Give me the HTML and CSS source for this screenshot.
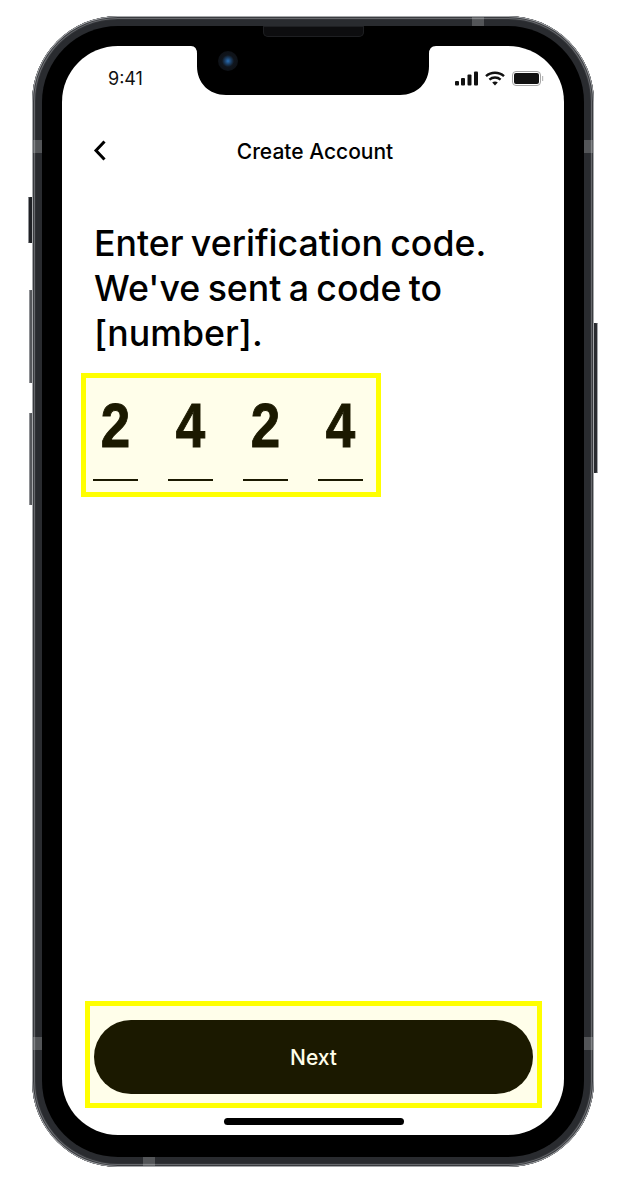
FILE: index.html
```html
<!DOCTYPE html>
<html lang="en">

<head>
    <meta charset="UTF-8">
    <meta name="viewport" content="width=device-width, initial-scale=1.0">
    <title>Create Account</title>
    <link rel="stylesheet" href="styles.css">
</head>

<body>
    <div class="phone">
        <!-- side buttons -->
        <span class="side-btn mute"></span>
        <span class="side-btn vol-up"></span>
        <span class="side-btn vol-down"></span>
        <span class="side-btn power"></span>

        <!-- antenna bands -->
        <span class="band band-left-top"></span>
        <span class="band band-right-top"></span>
        <span class="band band-left-bottom"></span>
        <span class="band band-right-bottom"></span>
        <span class="band band-top"></span>
        <span class="band band-bottom"></span>

        <span class="speaker"></span>

        <div class="bezel">
            <div class="screen">
                <svg class="notch" width="245" height="49" viewBox="0 0 245 49">
                    <path d="M0 0H245Q238 0 238 8V20C238 37 226 49 209 49H35C18 49 6 37 6 20V8Q6 0 0 0Z" fill="#000" />
                </svg>
                <span class="camera"></span>

                <div class="status-bar">
                    <span class="time">9:41</span>
                    <div class="status-icons">
                        <svg width="23" height="15" viewBox="0 0 23 15">
                            <rect x="0" y="10" width="4" height="4.5" rx="1" fill="#111" />
                            <rect x="6" y="7" width="4" height="7.5" rx="1" fill="#111" />
                            <rect x="12.5" y="3.5" width="4" height="11" rx="1" fill="#111" />
                            <rect x="19" y="0.5" width="4" height="14" rx="1" fill="#111" />
                        </svg>
                        <svg width="20" height="15" viewBox="0 0 20 15">
                            <path d="M1 5.2C6 .6 14 .6 19 5.2" fill="none" stroke="#111" stroke-width="2.4" />
                            <path d="M4.4 8.7C7.6 5.8 12.4 5.8 15.6 8.7" fill="none" stroke="#111" stroke-width="2.4" />
                            <path d="M7.2 11.4C8.8 10.2 11.2 10.2 12.8 11.4L10 14.4Z" fill="#111" />
                        </svg>
                        <svg width="32" height="15" viewBox="0 0 32 15">
                            <rect x="0.5" y="0.5" width="28" height="14" rx="3.5" fill="none" stroke="#a5a5a5" />
                            <rect x="2" y="2" width="25" height="11" rx="2" fill="#111" />
                            <rect x="30" y="5" width="1.2" height="5" fill="#bbb" />
                        </svg>
                    </div>
                </div>

                <div class="nav">
                    <svg class="back" width="13" height="21" viewBox="0 0 13 21">
                        <path d="M11.5 1.5L3 10.5L11.5 19.5" fill="none" stroke="#000" stroke-width="3" />
                    </svg>
                    <div class="nav-title">Create Account</div>
                </div>

                <h1>Enter verification code.<br>We've sent a code to<br>[number].</h1>

                <div class="code-box">
                    <div class="code-cell"><span>2</span></div>
                    <div class="code-cell"><span>4</span></div>
                    <div class="code-cell"><span>2</span></div>
                    <div class="code-cell"><span>4</span></div>
                </div>

                <div class="next-box">
                    <button class="next-btn">Next</button>
                </div>

                <div class="home-indicator"></div>
            </div>
        </div>
    </div>
</body>

</html>
```
FILE: styles.css
```css
* {
    box-sizing: border-box;
    margin: 0;
    padding: 0;
    font-family: Inter, 'Liberation Sans', sans-serif;
}

body {
    background-color: #fff;
    padding: 16px 0 0 32px;
    min-height: 100vh;
}

.phone {
    position: relative;
    width: 562px;
    height: 1151px;
    padding: 10px;
    border-radius: 86px;
    background-color: #292b2f;
    box-shadow: inset 0 0 0 1px #a5a7aa, inset 0 0 0 2px #3a3c40, inset 0 0 0 3px #66686c, inset 0 0 0 4px #303236;
}

.side-btn {
    position: absolute;
    width: 4px;
    background-color: #2a2c30;
    border-radius: 1px 0 0 1px;
    box-shadow: inset 1px 0 0 #8e9094;
}

.mute {
    left: -4px;
    top: 181px;
    height: 46px;
    background-color: #1f2125;
}

.vol-up {
    left: -3px;
    width: 3px;
    top: 274px;
    height: 93px;
    background-color: #55575b;
}

.vol-down {
    left: -3px;
    width: 3px;
    top: 397px;
    height: 92px;
    background-color: #55575b;
}

.power {
    right: -4px;
    top: 307px;
    height: 150px;
    border-radius: 0 1px 1px 0;
    box-shadow: inset -1px 0 0 #a5a7ab;
}

.band {
    position: absolute;
    background-color: rgba(255, 255, 255, 0.2);
}

.band-left-top,
.band-left-bottom {
    left: 1px;
    width: 9px;
    height: 13px;
}

.band-right-top,
.band-right-bottom {
    right: 1px;
    width: 9px;
    height: 13px;
}

.band-left-top,
.band-right-top {
    top: 124px;
}

.band-left-bottom,
.band-right-bottom {
    top: 1021px;
}

.band-top,
.band-bottom {
    width: 12px;
    height: 9px;
}

.band-top {
    left: 440px;
    top: 1px;
}

.band-bottom {
    left: 111px;
    bottom: 1px;
}

.speaker {
    position: absolute;
    z-index: 2;
    left: 231px;
    top: 10px;
    width: 101px;
    height: 11px;
    border-radius: 0 0 5px 5px;
    background-color: #0d0d0f;
    box-shadow: inset 0 0 0 1px #1e1f22;
}

.bezel {
    height: 100%;
    padding: 20px;
    border-radius: 76px;
    background-color: #000;
}

.screen {
    position: relative;
    height: 1089px;
    display: flex;
    flex-direction: column;
    border-radius: 56px;
    background-color: #fff;
    overflow: hidden;
}

.notch {
    position: absolute;
    left: 129px;
    top: 0;
}

.camera {
    position: absolute;
    left: 156px;
    top: 5px;
    width: 20px;
    height: 20px;
    border-radius: 50%;
    background: radial-gradient(circle at 50% 50%, #2a6fb5 0, #1b3f66 3px, #10151c 6px, #0b0d11 100%);
}

.status-bar {
    display: flex;
    justify-content: space-between;
    align-items: center;
    height: 24px;
    margin-top: 20px;
    padding: 0 20px 0 46px;
}

.time {
    font-size: 18px;
    color: #111;
}

.status-icons {
    display: flex;
    align-items: center;
    gap: 7px;
}

.status-icons svg {
    display: block;
}

.nav {
    display: grid;
    grid-template-columns: 1fr auto 1fr;
    align-items: center;
    height: 40px;
    margin-top: 41px;
    padding: 0 27px 0 31px;
}

.back {
    display: block;
    margin-top: -2px;
}

.nav-title {
    font-size: 21px;
    font-weight: 500;
    color: #000;
}

h1 {
    margin: 50px 0 0 32px;
    font-size: 35.7px;
    line-height: 45px;
    font-weight: 500;
    word-spacing: -2.2px;
    color: #000;
}

.code-box {
    display: flex;
    gap: 30px;
    width: 300px;
    height: 124px;
    margin: 17px 0 0 19px;
    padding: 0 7px;
    border: 5px solid #ffff00;
    background-color: #fffeea;
}

.code-cell {
    width: 45px;
    height: 103px;
    border-bottom: 2px solid #1b1900;
    font-family: 'Liberation Sans', sans-serif;
    font-size: 63px;
    line-height: 94px;
    font-weight: 700;
    text-align: center;
    color: #1b1900;
}

.code-cell span {
    display: block;
    font-family: inherit;
    transform: scaleX(0.84);
    -webkit-text-stroke: 1px #1b1900;
}

.next-box {
    margin: auto 0 0 23px;
    width: 457px;
    height: 107px;
    padding: 14px 4px 0;
    border: 5px solid #ffff00;
    background-color: #fffeea;
}

.next-btn {
    display: block;
    width: 439px;
    height: 74px;
    border: none;
    border-radius: 37px;
    background-color: #1b1900;
    color: #fffeea;
    font-size: 21px;
    font-weight: 500;
}

.home-indicator {
    width: 180px;
    height: 7px;
    margin: 10px 0 10px 162px;
    border-radius: 4px;
    background-color: #000;
}
```
